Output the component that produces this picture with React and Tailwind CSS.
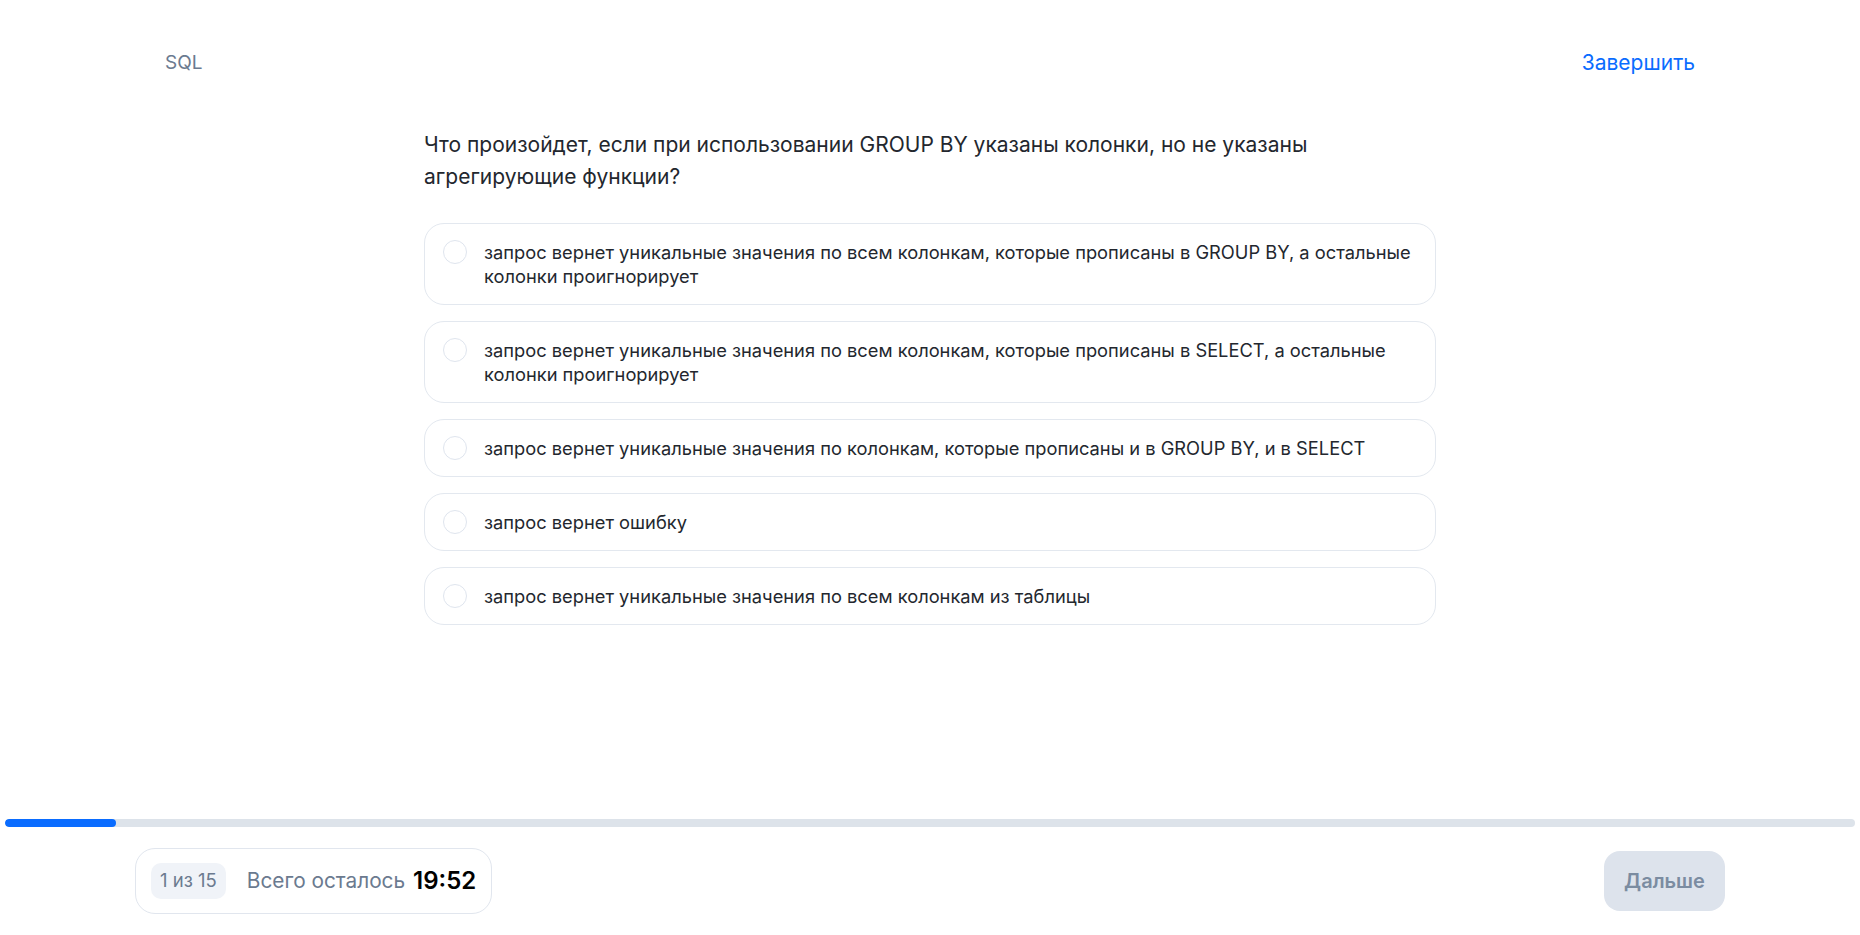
import React from "react";

const options = [
  "запрос вернет уникальные значения по всем колонкам, которые прописаны в GROUP BY, а остальные колонки проигнорирует",
  "запрос вернет уникальные значения по всем колонкам, которые прописаны в SELECT, а остальные колонки проигнорирует",
  "запрос вернет уникальные значения по колонкам, которые прописаны и в GROUP BY, и в SELECT",
  "запрос вернет ошибку",
  "запрос вернет уникальные значения по всем колонкам из таблицы",
];

export default function App() {
  return (
    <div
      className="h-[935px] w-full bg-white flex flex-col text-[#1f2937]"
      style={{ fontFamily: "Inter, 'Noto Sans', sans-serif" }}
    >
      <header className="w-[1590px] mx-auto px-[30px] pt-[49px] flex items-center justify-between">
        <span className="text-[19px] leading-[28px] text-[#6b7a90]">SQL</span>
        <button className="text-[21px] leading-[28px] text-[#0a6cff]">Завершить</button>
      </header>

      <main className="w-[1012px] mx-auto pt-[52px] flex-1">
        <h1 className="max-w-[960px] text-[21px] leading-[32px] text-[#23272e] font-normal">
          Что произойдет, если при использовании GROUP BY указаны колонки, но не указаны агрегирующие функции?
        </h1>
        <div className="mt-[30px] flex flex-col gap-4">
          {options.map((o, i) => (
            <label
              key={i}
              className="flex items-start gap-[17px] rounded-[20px] border border-[#e3e8ef] pl-[18px] pr-[10px] py-4 cursor-pointer"
            >
              <span className="shrink-0 w-6 h-6 rounded-full border border-[#dfe5ee] bg-white" />
              <span className="text-[18.3px] leading-6 text-[#23272e]">{o}</span>
            </label>
          ))}
        </div>
      </main>

      <div className="px-[5px]">
        <div className="h-2 w-full rounded-full bg-[#dde3ea] overflow-hidden">
          <div className="h-full w-[111px] rounded-full bg-[#0a6cff]" />
        </div>
      </div>

      <footer className="w-[1590px] mx-auto mt-[21px] mb-[21px] flex items-center justify-between">
        <div className="h-[66px] flex items-center rounded-[20px] border border-[#e1e6ee] pl-[15px] pr-[15px]">
          <span className="h-9 px-[9px] flex items-center rounded-[10px] bg-[#f0f3f8] text-[18.5px] text-[#6b7a8f]">
            1 из 15
          </span>
          <span className="ml-[21px] text-[20.8px] text-[#6b7a8f]">Всего осталось</span>
          <span className="ml-[8px] text-[24px] font-semibold text-black">19:52</span>
        </div>
        <button className="h-[60px] w-[121px] rounded-[16px] bg-[#dde3ec] text-[20px] font-semibold text-[#7b8ca1]">
          Дальше
        </button>
      </footer>
    </div>
  );
}
